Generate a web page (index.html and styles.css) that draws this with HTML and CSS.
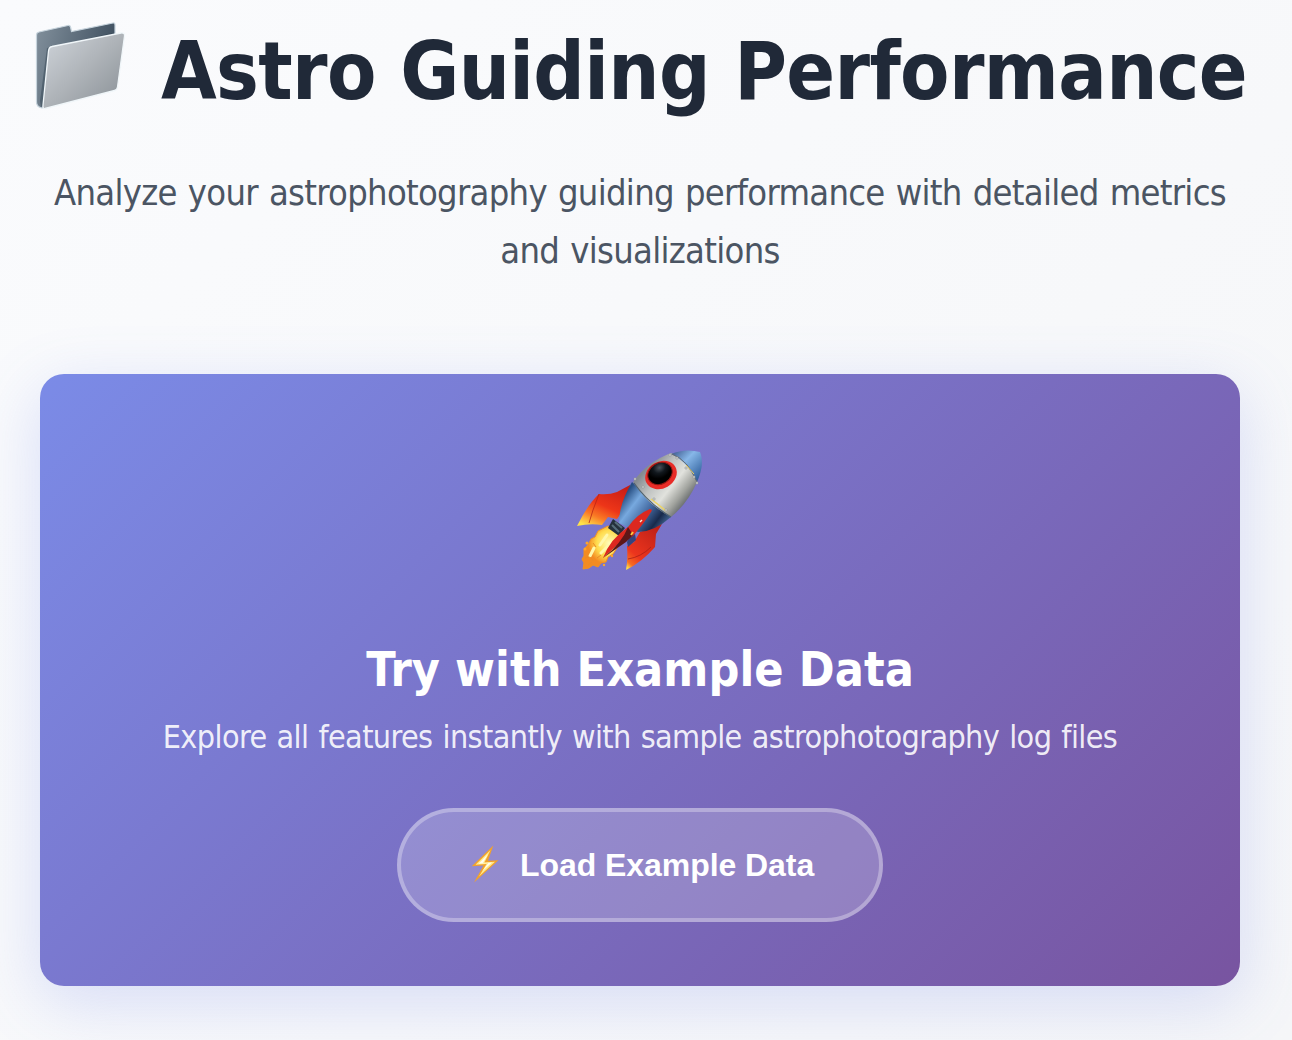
FILE: index.html
```
<!DOCTYPE html>
<html lang="en">
<head>
<meta charset="utf-8">
<title>Astro Guiding Performance</title>
<link rel="stylesheet" href="styles.css">
</head>
<body>
<main class="page">
  <header class="header">
    <h1 class="title">
      <svg class="folder" viewBox="0 0 100 100" aria-hidden="true">
        <defs>
          <linearGradient id="folderBack" x1="0" y1="0" x2="1" y2="0.3"><stop offset="0" stop-color="#82909c"/><stop offset="0.25" stop-color="#71808d"/><stop offset="1" stop-color="#3e4f5f"/></linearGradient>
          <linearGradient id="folderFront" x1="0" y1="0.1" x2="0.9" y2="1"><stop offset="0" stop-color="#cdd2d8"/><stop offset="0.5" stop-color="#aeb3b8"/><stop offset="1" stop-color="#8b9298"/></linearGradient>
        </defs>
        <path d="M6.500 14Q6.500 11.500 9 11L38 4.500Q40 4.200 40.500 6L41.500 10.500L83 2Q85 1.700 85 4V68L12 87Q6.500 86 6.500 81Z" fill="url(#folderBack)" stroke="#c7d4dd" stroke-width="1.200"/>
        <path d="M17 27L82 12V36L11 86L10 80Z" fill="#344554" opacity=".5"/>
        <path d="M18.500 30Q19 26 22 25.500L91 12Q95 11.500 94.500 15L87.500 66Q87 69 84.500 69.500L15 87.500Q12.500 88 13 84Z" fill="url(#folderFront)" stroke="#f0f6f9" stroke-width="1.300"/>
      </svg>
      <span class="title-text">Astro Guiding Performance</span>
    </h1>
    <p class="subtitle"><span>Analyze your astrophotography guiding performance with detailed metrics</span> <span>and visualizations</span></p>
  </header>
  <section class="card">
    <svg class="rocket" viewBox="0 0 150 140" aria-hidden="true">
      <defs>
        <linearGradient id="silver" gradientUnits="userSpaceOnUse" x1="80" y1="30" x2="124" y2="65"><stop offset="0" stop-color="#858b90"/><stop offset=".28" stop-color="#bfc2c1"/><stop offset=".55" stop-color="#e1e2dd"/><stop offset=".78" stop-color="#a0a29d"/><stop offset="1" stop-color="#50555a"/></linearGradient>
        <linearGradient id="hull" gradientUnits="userSpaceOnUse" x1="56" y1="60" x2="97" y2="91"><stop offset="0" stop-color="#284f83"/><stop offset=".25" stop-color="#77a9df"/><stop offset=".55" stop-color="#42679e"/><stop offset=".8" stop-color="#182a4b"/><stop offset="1" stop-color="#456b98"/></linearGradient>
        <linearGradient id="nose" x1="0" y1="0" x2="1" y2="1"><stop offset="0" stop-color="#354f83"/><stop offset=".4" stop-color="#87b7e8"/><stop offset="1" stop-color="#1c4c8b"/></linearGradient>
        <linearGradient id="finLeft" x1=".8" y1="0" x2=".2" y2="1"><stop offset="0" stop-color="#c81d16"/><stop offset=".5" stop-color="#ed3518"/><stop offset=".75" stop-color="#f97824"/><stop offset="1" stop-color="#ffe24a"/></linearGradient>
        <linearGradient id="finRight" x1=".8" y1="0" x2=".1" y2="1"><stop offset="0" stop-color="#bd2018"/><stop offset=".7" stop-color="#ec351d"/><stop offset=".9" stop-color="#f86d22"/><stop offset="1" stop-color="#ffdf47"/></linearGradient>
        <radialGradient id="flame" cx=".65" cy=".4"><stop offset="0" stop-color="#fffdbb"/><stop offset=".6" stop-color="#ffdc4d"/><stop offset="1" stop-color="#f38b22"/></radialGradient>
        <radialGradient id="glass" cx=".6" cy=".25"><stop offset="0" stop-color="#4b535b"/><stop offset=".5" stop-color="#11171d"/><stop offset="1" stop-color="#000"/></radialGradient>
      </defs>
      <path d="M65 45L52 52Q44 55 34 54Q23 64 12 86Q25 83 37 85L43 77L52 79L65 61Z" fill="url(#finLeft)"/>
      <path d="M34 54L28 70L24 83" fill="none" stroke="#b72416" stroke-width=".8"/>
      <path d="M97 84L75 92L69 102Q66 104 62 106Q63 119 61 130Q77 122 90 107L91 94Z" fill="url(#finRight)"/>
      <path d="M63 119Q76 117 86 107" fill="none" stroke="#a91e16" stroke-width=".8"/>
      <path d="M65 96L70 94L71 100L63 107L62 102Z" fill="#34437d"/>
      <path d="M43 86L59 94L54 105L48 114L43 117L41 122L36 123L33 127L28 125L24 128L18 129L19 123L17 119L19 116L19 109L23 105L26 99L30 97L33 91Z" fill="url(#flame)" stroke="#f09222" stroke-width="1"/>
      <path d="M42 95L35 105M29 108L25 116M43 106L36 113" fill="none" stroke="#fff8ab" stroke-width="3" stroke-linecap="round"/>
      <path d="M20 118Q26 115 28 121M28 103L31 107M32 118L36 115M23 125L27 122" fill="none" stroke="#e98b26" stroke-width="1"/>
      <g fill="#fda52c"><circle cx="22" cy="103" r="1.500"/><circle cx="20" cy="109" r="1.500"/><circle cx="39" cy="125" r="1.200"/><circle cx="47" cy="116" r="1.200"/></g>
      <path d="M67 42L106 77Q89 92 73 92L54 83Q54 64 67 42Z" fill="url(#hull)"/>
      <path d="M48 79L60 88L54 96L43 88Z" fill="#25313c"/><path d="M50 82L57 88M47 85L54 92" stroke="#566d7b" stroke-width="2"/>
      <path d="M68 42Q82 22 106 13Q123 18 132 42Q123 63 106 77Q83 65 68 42Z" fill="url(#silver)"/>
      <path d="M106 14Q120 8 135 12Q140 24 132 42Q122 21 106 14Z" fill="url(#nose)"/>
      <path d="M107 14Q123 20 132 42" fill="none" stroke="#656b70" stroke-width="1"/>
      <path d="M69 43Q83 63 106 77" fill="none" stroke="#4f6270" stroke-width="1.200"/><path d="M86 59Q94 65 101 71" fill="none" stroke="#edd563" stroke-width="1.500"/><path d="M121 25L129 34" stroke="#ebcf63"/>
      <ellipse cx="96" cy="35" rx="16.500" ry="13.300" transform="rotate(-29 96 35)" fill="#e82c27"/>
      <ellipse cx="95" cy="33.500" rx="12.800" ry="10.500" transform="rotate(-31 95 33.500)" fill="url(#glass)" stroke="#941711" stroke-width="1"/>
      <path d="M85 69Q88 70 86 72Q80 82 68 96L51 106L38 118Q45 99 63 87Q72 74 85 69Z" fill="#dc2820"/>
      <path d="M63 87Q57 103 38 118L61 102L68 95Z" fill="#5d1718"/><path d="M66 95L68 92" stroke="#ffc83e" stroke-width="2"/><path d="M75 82L77 80" stroke="#f5e9d9" stroke-width="1.500"/>
      <g fill="#d4d6d2" stroke="#73797d" stroke-width=".4"><circle cx="70" cy="39" r="1.200"/><circle cx="78" cy="47" r="1.200"/><circle cx="89" cy="59" r="1.200"/><circle cx="101" cy="70" r="1.200"/><circle cx="105" cy="15" r="1.200"/><circle cx="112" cy="18" r="1.200"/><circle cx="121" cy="28" r="1.200"/><circle cx="129" cy="37" r="1.200"/><circle cx="132" cy="43" r="1.200"/></g>
    </svg>
    <h2 class="card-title">Try with Example Data</h2>
    <p class="card-text">Explore all features instantly with sample astrophotography log files</p>
    <button class="load" type="button">
      <svg class="bolt" viewBox="0 0 28 40" aria-hidden="true"><path d="M22.300 1.500L.7 22.300L12.500 21.600L3 38.500L27.500 16.200L17 16.700Z" fill="#f2a22c"/><path d="M19.500 6L4.500 20.800L15.500 20L8 32.500L24 17.700L13.500 18.500Z" fill="#ffe98b"/><path d="M17 10L7.500 19.800L17.300 19L11.500 27L21 18.500L12 19Z" fill="#fffef0"/></svg>
      <span>Load Example Data</span>
    </button>
  </section>
</main>
</body>
</html>
```
FILE: styles.css
```
* { box-sizing: border-box; }
html { min-height: 100%; background: linear-gradient(135deg, #fafbfd, #f5f6f8); }
body { margin: 0; font-family: "DejaVu Sans Condensed", "DejaVu Sans", sans-serif; font-stretch: condensed; overflow: hidden; }
.page { width: 1280px; height: 1040px; padding: 8px 40px 0; }
.header { height: 366px; text-align: center; }
.title { display: flex; align-items: center; height: 128px; margin: 0 -10px; color: #202938; font-size: 80px; line-height: 128px; white-space: nowrap; }
.folder { flex: none; width: 100px; height: 100px; margin-right: 31px; margin-bottom: 3px; }
.title-text { letter-spacing: -.62px; }
.subtitle { margin: 28px 0 0; color: #4b5563; font-size: 36px; line-height: 58px; letter-spacing: -.7px; word-spacing: 1.5px; white-space: nowrap; }
.subtitle span { display: block; }
.card { display: flex; flex-direction: column; align-items: center; height: 612px; padding-top: 66px; border-radius: 24px; color: #fff; background: linear-gradient(135deg, #7b8be7, #7854a0); box-shadow: 0 16px 64px rgba(102, 126, 234, .23); }
.rocket { width: 150px; height: 140px; }
.card-title { margin: 51px 0 0; font-size: 48px; line-height: 76px; letter-spacing: .08px; }
.card-text { margin: 4px 0 0; font-size: 32px; line-height: 52px; letter-spacing: -.6px; word-spacing: 1.5px; color: rgba(255, 255, 255, .9); white-space: nowrap; }
.load { display: flex; align-items: center; width: 486px; height: 114px; margin-top: 45px; padding: 0 0 0 70px; border: 4px solid rgba(255, 255, 255, .3); border-radius: 57px; background: rgba(255, 255, 255, .2); color: #fff; font: bold 32px "Liberation Sans", Arial, sans-serif; letter-spacing: -.06px; white-space: nowrap; }
.bolt { width: 28px; height: 40px; margin-right: 21px; position: relative; top: -1px; }
```
